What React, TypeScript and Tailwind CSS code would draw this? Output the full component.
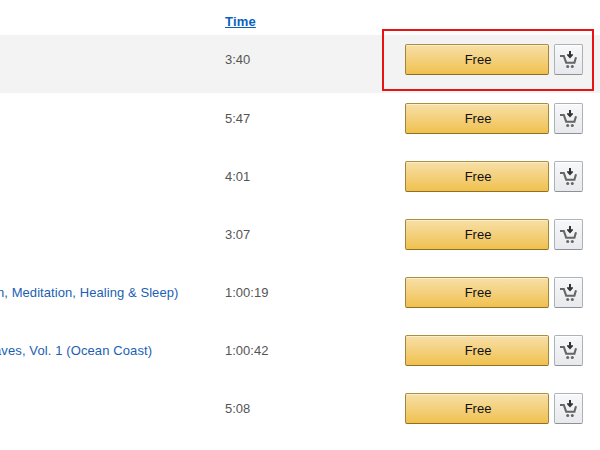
interface Track {
  time: string
  album?: string
  albumClass?: string
}

const tracks: Track[] = [
  { time: '3:40' },
  { time: '5:47' },
  { time: '4:01' },
  { time: '3:07' },
  { time: '1:00:19', album: 'n, Meditation, Healing & Sleep)', albumClass: '-ml-[3px] tracking-[0.07px]' },
  { time: '1:00:42', album: 'aves, Vol. 1 (Ocean Coast)', albumClass: '-ml-[6px] tracking-[0.11px]' },
  { time: '5:08' },
]

function CartIcon() {
  return (
    <svg className="w-[18px] h-[18px]" viewBox="0 0 18 18" fill="none">
      <path d="M1 6H4.8L7.2 12.7H15.4L17 7.2" stroke="#666" strokeWidth={2.1} />
      <path d="M10 1h2v3.2h2v1L11 8.4 8 5.2v-1h2z" fill="#333" />
      <circle cx="8.7" cy="16.5" r="1.5" fill="#666" />
      <circle cx="13.3" cy="16.5" r="1.5" fill="#666" />
    </svg>
  )
}

function BuyButtons() {
  return (
    <div className="flex gap-[5px]">
      <button className="w-36 h-[31px] pl-[2px] rounded-[2px] border border-[#a2843b] border-t-[#ab8e40] border-b-[#8c7029] bg-linear-to-b from-[#f7dfa5] to-[#f0c14b] shadow-[inset_0_1px_0_#fbeecb] text-[#111] leading-[29px]">
        Free
      </button>
      <button
        className="w-[29px] h-[31px] rounded-[2px] border border-[#adb1b8] border-b-[#8d9096] bg-linear-to-b from-[#f7f8fa] to-[#e7e9ec] shadow-[inset_0_1px_0_#fff] pl-1 pt-[5px] flex items-start"
        aria-label="Add to cart"
      >
        <CartIcon />
      </button>
    </div>
  )
}

function TrackRow({ track, active }: { track: Track; active: boolean }) {
  return (
    <div className={`h-[58px] flex pt-[9px] ${active ? 'bg-[#f3f3f3] mb-px' : ''}`}>
      <div className="w-[225px] shrink-0 leading-[31px] text-[#1a5fb4]">
        {track.album && <div className={`whitespace-nowrap ${track.albumClass}`}>{track.album}</div>}
      </div>
      <div className="w-[180px] shrink-0 leading-[31px] text-[#555]">{track.time}</div>
      <BuyButtons />
    </div>
  )
}

export default function App() {
  return (
    <div className="relative w-[600px] h-[450px] overflow-hidden bg-white font-['Liberation_Sans',Arial,sans-serif] text-[13px]">
      <div className="h-[35px] pl-[225px] pt-[14px] leading-[15px]">
        <a className="font-bold underline tracking-[0.2px] text-[#0b62bd]">Time</a>
      </div>
      {tracks.map((track, i) => (
        <TrackRow key={track.time} track={track} active={i === 0} />
      ))}

      {/* Callout around the first row's buttons */}
      <div className="absolute left-[382px] top-[29px] w-[212px] h-[62px] border-2 border-[#e81414]" />
    </div>
  )
}
